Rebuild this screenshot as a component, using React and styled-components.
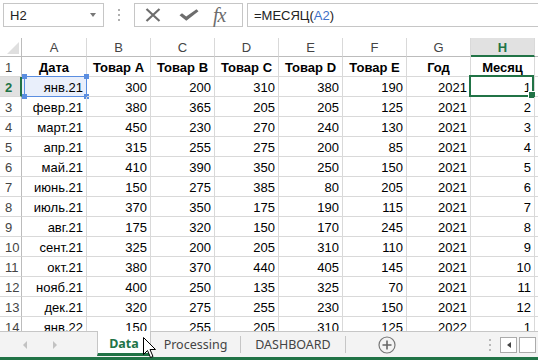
import React from 'react';
import styled, { createGlobalStyle } from 'styled-components';

const GREEN = '#217346';
const GRID = '#d9d9d9';

const Global = createGlobalStyle`
  html, body { margin: 0; padding: 0; background: #fff; overflow: hidden; }
  body { font-family: "Liberation Sans", Arial, sans-serif; }
  * { box-sizing: border-box; }
`;

const Frame = styled.div`
  width: 538px;
  height: 360px;
  display: flex;
  flex-direction: column;
  overflow: hidden;
  position: relative;
  background: #fff;
`;

const FormulaBar = styled.div`
  height: 38px;
  flex: none;
  padding: 3px 0 0 3px;
  display: flex;
  align-items: flex-start;
`;

const NameBox = styled.div`
  width: 101px;
  height: 24px;
  border: 1px solid #c6c6c6;
  display: flex;
  align-items: center;
  justify-content: space-between;
  padding: 0 7px 0 6px;
  font-size: 13px;
  color: #222;
`;

const DropArrow = styled.span`
  width: 0;
  height: 0;
  border-left: 3.5px solid transparent;
  border-right: 3.5px solid transparent;
  border-top: 4px solid #777;
`;

const Grip = styled.div`
  width: 30px;
  height: 24px;
  display: flex;
  flex-direction: column;
  align-items: center;
  justify-content: center;
  gap: 3px;
  span { width: 2px; height: 2px; background: #b0b0b0; display: block; }
`;

const Buttons = styled.div`
  width: 109px;
  height: 24px;
  border: 1px solid #c6c6c6;
  display: flex;
  align-items: center;
  padding-left: 10px;
  gap: 0;
`;

const IconSlot = styled.div`
  width: ${p => p.$w}px;
  height: 22px;
  display: flex;
  align-items: center;
  justify-content: ${p => p.$j || 'flex-start'};
`;

const Fx = styled.span`
  font-family: "Liberation Serif", "Times New Roman", serif;
  font-style: italic;
  font-size: 20px;
  color: #6d6d6d;
  line-height: 1;
  letter-spacing: -1px;
`;

const FormulaInput = styled.div`
  flex: 1;
  height: 24px;
  margin-left: 4px;
  border: 1px solid #c6c6c6;
  border-right: none;
  display: flex;
  align-items: center;
  padding-left: 6px;
  font-size: 13px;
  color: #222;
`;

const Ref = styled.span`
  color: #3e70c7;
`;

const Sheet = styled.div`
  flex: 1;
  overflow: hidden;
  display: grid;
  grid-template-columns: 22px 65px repeat(7, 64px) 1fr;
  grid-template-rows: 19px;
  grid-auto-rows: 20px;
  align-content: start;
`;

const Corner = styled.div`
  border-right: 1px solid #bcbcbc;
  border-bottom: 1px solid #bcbcbc;
  position: relative;
  &::after {
    content: '';
    position: absolute;
    right: 2px;
    bottom: 2px;
    width: 0;
    height: 0;
    border-left: 12px solid transparent;
    border-bottom: 12px solid #dfdfdf;
  }
`;

const ColHead = styled.div`
  display: flex;
  align-items: center;
  justify-content: center;
  font-size: 13px;
  color: ${p => (p.$active ? GREEN : '#444')};
  font-weight: ${p => (p.$active ? 700 : 400)};
  background: ${p => (p.$active ? '#e1e1e1' : '#fff')};
  border-right: 1px solid ${GRID};
  border-bottom: ${p => (p.$active ? `2px solid ${GREEN}` : '1px solid #bcbcbc')};
  padding-top: ${p => (p.$active ? 1 : 0)}px;
`;

const RowHead = styled.div`
  display: flex;
  align-items: center;
  padding-left: 5px;
  padding-top: 1px;
  font-size: 13px;
  color: ${p => (p.$active ? GREEN : '#444')};
  font-weight: ${p => (p.$active ? 700 : 400)};
  background: ${p => (p.$active ? '#e1e1e1' : '#fff')};
  border-bottom: 1px solid ${GRID};
  border-right: ${p => (p.$active ? `2px solid ${GREEN}` : '1px solid #bcbcbc')};
`;

const Cell = styled.div`
  position: relative;
  display: flex;
  align-items: center;
  justify-content: ${p => (p.$center ? 'center' : 'flex-end')};
  padding: 1px 3px 0 3px;
  font-size: 13px;
  font-weight: ${p => (p.$bold ? 700 : 400)};
  color: #000;
  white-space: nowrap;
  background: ${p => (p.$ref ? '#e9effb' : 'transparent')};
  border-right: 1px solid ${GRID};
  border-bottom: 1px solid ${GRID};
`;

const RefBox = styled.div`
  position: absolute;
  left: 2px;
  top: -1px;
  right: -1px;
  bottom: -1px;
  border: 1.5px solid #5b8ee0;
  pointer-events: none;
`;

const Handle = styled.span`
  position: absolute;
  width: 5px;
  height: 5px;
  background: #5b8ee0;
  ${p => (p.$t ? 'top: -3px;' : 'bottom: -3px;')}
  ${p => (p.$l ? 'left: -3px;' : 'right: -3px;')}
`;

const ActiveBox = styled.div`
  position: absolute;
  left: -2px;
  top: -2px;
  right: 0;
  bottom: -1px;
  border: 2px solid ${GREEN};
  pointer-events: none;
  &::after {
    content: '';
    position: absolute;
    right: -4px;
    bottom: -4px;
    width: 6px;
    height: 6px;
    background: ${GREEN};
    border: 1px solid #fff;
  }
`;

const TabBar = styled.div`
  height: 29px;
  flex: none;
  background: #f3f3f3;
  border-top: 1px solid #c6c6c6;
  border-bottom: 3px solid ${GREEN};
  display: flex;
  align-items: flex-start;
  font-family: "Noto Sans", "Liberation Sans", sans-serif;
  font-size: 12.5px;
`;

const Nav = styled.div`
  width: 97px;
  height: 25px;
  display: flex;
  align-items: center;
  padding-left: 23px;
  gap: 26px;
`;

const Tri = styled.span`
  width: 0;
  height: 0;
  border-top: 4px solid transparent;
  border-bottom: 4px solid transparent;
  ${p => (p.$left ? 'border-right: 4px solid #c2c2c2;' : 'border-left: 4px solid #c2c2c2;')}
`;

const Tab = styled.div`
  height: ${p => (p.$active ? 25 : 25)}px;
  margin-top: ${p => (p.$active ? -1 : 0)}px;
  display: flex;
  align-items: center;
  justify-content: center;
  width: ${p => p.$w}px;
  background: ${p => (p.$active ? '#fff' : 'transparent')};
  color: ${p => (p.$active ? GREEN : '#444')};
  font-weight: ${p => (p.$active ? 700 : 400)};
  border-left: ${p => (p.$active ? '1px solid #c6c6c6' : 'none')};
  border-right: ${p => (p.$active ? '1px solid #c6c6c6' : 'none')};
  border-bottom: ${p => (p.$active ? `3px solid ${GREEN}` : 'none')};
  padding-top: ${p => (p.$active ? 2 : 0)}px;
`;

const Sep = styled.span`
  width: 1px;
  height: 17px;
  margin-top: 4px;
  background: #c6c6c6;
`;

const NewSheet = styled.div`
  width: 80px;
  height: 25px;
  display: flex;
  align-items: center;
  justify-content: center;
  margin-left: 1px;
`;

const Spacer = styled.div`
  flex: 1;
`;

const VDots = styled.div`
  width: 20px;
  height: 25px;
  display: flex;
  flex-direction: column;
  align-items: center;
  justify-content: center;
  gap: 3px;
  span { width: 2px; height: 2px; background: #b8b8b8; display: block; }
`;

const ScrollBtn = styled.div`
  width: 17px;
  height: 16px;
  margin-top: 5px;
  margin-right: 2px;
  border: 1px solid #ababab;
  background: #fff;
  display: flex;
  align-items: center;
  justify-content: center;
`;

const SmallTri = styled.span`
  width: 0;
  height: 0;
  border-top: 3.5px solid transparent;
  border-bottom: 3.5px solid transparent;
  border-right: 4px solid #444;
`;

const Pointer = styled.svg`
  position: absolute;
  left: 143px;
  top: 337px;
  pointer-events: none;
`;

const COLS = ['A', 'B', 'C', 'D', 'E', 'F', 'G', 'H'];
const HEAD = ['Дата', 'Товар A', 'Товар B', 'Товар C', 'Товар D', 'Товар E', 'Год', 'Месяц'];
const DATA = [
  ['янв.21', 300, 200, 310, 380, 190, 2021, 1],
  ['февр.21', 380, 365, 205, 205, 125, 2021, 2],
  ['март.21', 450, 230, 270, 240, 130, 2021, 3],
  ['апр.21', 315, 255, 275, 200, 85, 2021, 4],
  ['май.21', 410, 390, 350, 250, 150, 2021, 5],
  ['июнь.21', 150, 275, 385, 80, 205, 2021, 6],
  ['июль.21', 370, 350, 175, 190, 115, 2021, 7],
  ['авг.21', 175, 320, 150, 170, 245, 2021, 8],
  ['сент.21', 325, 200, 205, 310, 110, 2021, 9],
  ['окт.21', 380, 370, 440, 405, 145, 2021, 10],
  ['нояб.21', 400, 250, 135, 325, 70, 2021, 11],
  ['дек.21', 320, 275, 255, 230, 150, 2021, 12],
  ['янв.22', 150, 255, 205, 310, 125, 2022, 1],
];

export default function App() {
  return (
    <>
      <Global />
      <Frame>
        <FormulaBar>
          <NameBox>
            <span>H2</span>
            <DropArrow />
          </NameBox>
          <Grip><span /><span /><span /></Grip>
          <Buttons>
            <IconSlot $w={34}>
              <svg width="16" height="14" viewBox="0 0 16 14">
                <path d="M1.5 1 L14.5 13 M14.5 1 L1.5 13" stroke="#6d6d6d" strokeWidth="2.2" fill="none" />
              </svg>
            </IconSlot>
            <IconSlot $w={34}>
              <svg width="20" height="12" viewBox="0 0 20 12">
                <path d="M0.5 6.2 L3 4.2 L7.2 7.6 L17.5 0.3 L19.5 2.2 L7.3 11.8 Z" fill="#6d6d6d" />
              </svg>
            </IconSlot>
            <IconSlot $w={28}>
              <Fx>fx</Fx>
            </IconSlot>
          </Buttons>
          <FormulaInput>
            =МЕСЯЦ(<Ref>A2</Ref>)
          </FormulaInput>
        </FormulaBar>

        <Sheet>
          <Corner />
          {COLS.map(c => (
            <ColHead key={c} $active={c === 'H'}>{c}</ColHead>
          ))}
          <ColHead />
          <RowHead>1</RowHead>
          {HEAD.map(h => (
            <Cell key={h} $bold $center>{h}</Cell>
          ))}
          <Cell />
          {DATA.map((row, i) => {
            const r = i + 2;
            return (
              <React.Fragment key={r}>
                <RowHead $active={r === 2}>{r}</RowHead>
                {row.map((v, j) => (
                  <Cell key={j} $ref={r === 2 && j === 0}>
                    {v}
                    {r === 2 && j === 0 && (
                      <RefBox>
                        <Handle $t $l />
                        <Handle $t />
                        <Handle $l />
                        <Handle />
                      </RefBox>
                    )}
                    {r === 2 && j === 7 && <ActiveBox />}
                  </Cell>
                ))}
                <Cell />
              </React.Fragment>
            );
          })}
        </Sheet>

        <TabBar>
          <Nav>
            <Tri $left />
            <Tri />
          </Nav>
          <Tab $active $w={54}>Data</Tab>
          <Tab $w={89}>Processing</Tab>
          <Sep />
          <Tab $w={104}>DASHBOARD</Tab>
          <Sep />
          <NewSheet>
            <svg width="18" height="18" viewBox="0 0 18 18">
              <circle cx="9" cy="9" r="8" fill="none" stroke="#777" strokeWidth="1.2" />
              <path d="M9 4.5 V13.5 M4.5 9 H13.5" stroke="#666" strokeWidth="1.6" />
            </svg>
          </NewSheet>
          <Spacer />
          <VDots><span /><span /><span /></VDots>
          <ScrollBtn><SmallTri /></ScrollBtn>
          <ScrollBtn />
        </TabBar>

        <Pointer width="13" height="24" viewBox="0 0 13 24">
          <path d="M0.5 0.5 L0.5 17.5 L4.5 13.5 L7.5 20.5 L10 19.5 L7 12.5 L12.5 12.5 Z" fill="#fff" stroke="#000" strokeWidth="1" strokeLinejoin="miter" />
        </Pointer>
      </Frame>
    </>
  );
}
